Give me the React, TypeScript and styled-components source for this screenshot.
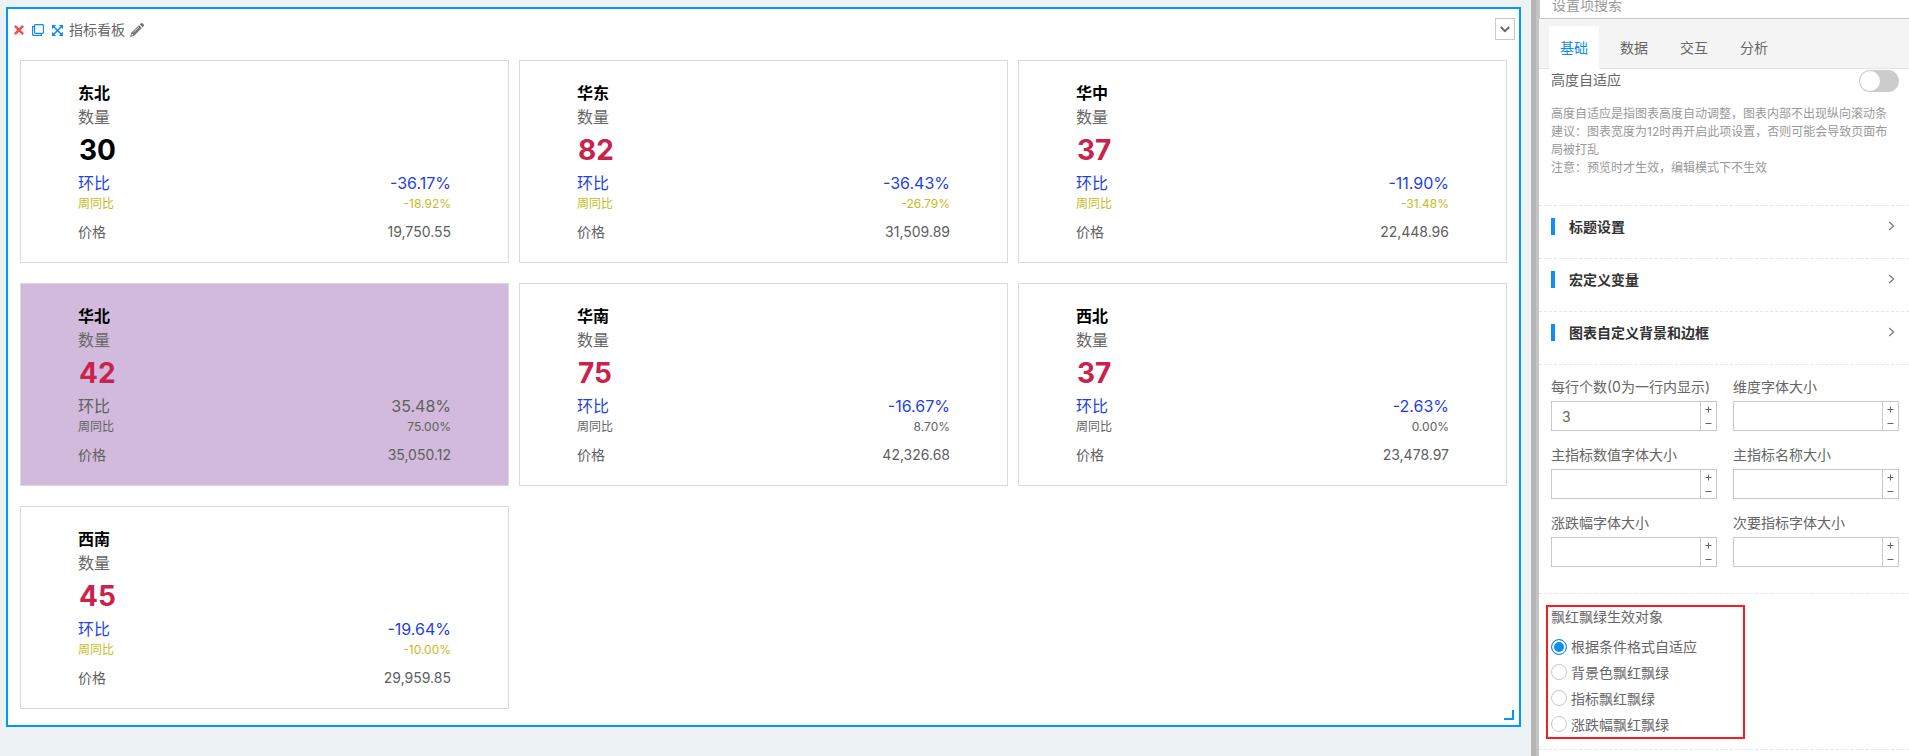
import React, { useState } from "react";
import styled, { createGlobalStyle } from "styled-components";

const GlobalStyle = createGlobalStyle`
  * { box-sizing: border-box; }
  body {
    margin: 0;
    background: #edf2f4;
    color: #666;
    font-family: Inter, "Noto Sans CJK SC", sans-serif;
    font-size: 14px;
    line-height: 21px;
  }
  button, input { font: inherit; color: inherit; }
  h2, p { margin: 0; }
`;

const Page = styled.div`
  display: flex;
  height: 100vh;
  overflow: hidden;
`;

const Canvas = styled.main`
  flex: 1;
  min-width: 0;
  padding: 7px 10px 7px 6px;
`;

const Board = styled.section`
  position: relative;
  background: #fff;
  border: 2px solid #0099fb;
  padding-bottom: 16px;
`;

const BoardHeader = styled.header`
  display: flex;
  align-items: center;
  padding: 9px 4px 20px 6px;
`;

const BoardTools = styled.div`
  display: flex;
  align-items: center;
  padding-top: 2px;
`;

const IconButton = styled.button<{ $color: string; $gap: number }>`
  display: flex;
  padding: 0;
  margin-right: ${(p) => p.$gap}px;
  border: 0;
  background: none;
  color: ${(p) => p.$color};
  cursor: pointer;
`;

const BoardTitle = styled.h2`
  margin-right: 5px;
  font-size: 14px;
  font-weight: 400;
  line-height: 20px;
`;

const MenuButton = styled.button`
  display: flex;
  align-items: center;
  justify-content: center;
  width: 20px;
  height: 22px;
  margin-left: auto;
  padding: 0;
  border: 1px solid #c8c8c8;
  background: #fff;
  cursor: pointer;
`;

const ResizeHandle = styled.span`
  position: absolute;
  right: 5px;
  bottom: 5px;
  width: 10px;
  height: 10px;
  border-right: 2px solid #0099fb;
  border-bottom: 2px solid #0099fb;
  cursor: nwse-resize;
`;

const CardGrid = styled.div`
  display: grid;
  grid-template-columns: repeat(3, minmax(0, 1fr));
  gap: 20px 10px;
  padding: 0 12px;
`;

const CardBox = styled.article<{ $tinted?: boolean }>`
  padding: 20px 57px;
  border: 1px solid #dadada;
  background: ${(p) => (p.$tinted ? "#d1badb" : "#fff")};
`;

const Region = styled.h2`
  color: #000;
  font-size: 16px;
  font-weight: 600;
  line-height: 24px;
`;

const MetricName = styled.p`
  font-size: 16px;
  line-height: 24px;
`;

const MetricValue = styled.p<{ $color: string }>`
  padding-left: 1px;
  color: ${(p) => p.$color};
  font-size: 28px;
  font-weight: 700;
  line-height: 42px;
`;

const rowSizes = {
  large: "font-size: 16px; line-height: 24px;",
  small: "font-size: 12px; line-height: 18px;",
  plain: "font-size: 14px; line-height: 21px; margin-top: 8px;",
};

const DetailRow = styled.div<{ $size: keyof typeof rowSizes; $color?: string }>`
  display: flex;
  justify-content: space-between;
  color: ${(p) => p.$color ?? "#606060"};
  ${(p) => rowSizes[p.$size]}
`;

const Splitter = styled.div`
  flex: none;
  width: 8px;
  border-right: 3px solid #c4c4c4;
  background: #b6b6b6;
`;

const Sidebar = styled.aside`
  flex: none;
  display: flex;
  flex-direction: column;
  width: 370px;
  overflow: hidden;
  background: #fff;
`;

const SearchBar = styled.div`
  flex: none;
  display: flex;
  align-items: flex-end;
  height: 19px;
  overflow: hidden;
`;

const SearchInput = styled.input`
  flex: none;
  width: 100%;
  height: 30px;
  padding: 0 12px;
  border: 1px solid #c8c8c8;
  border-right: 0;
  background: #fff;
  &::placeholder { color: #999; opacity: 1; }
`;

const TabList = styled.div`
  flex: none;
  display: flex;
  gap: 10px;
  height: 50px;
  padding: 7px 10px 0;
  background: #f4f4f4;
  box-shadow: inset 0 -1px #e4e4e4;
`;

const Tab = styled.button<{ $active: boolean }>`
  width: 50px;
  padding: 0;
  border: 0;
  border-radius: 2px 2px 0 0;
  background: ${(p) => (p.$active ? "#fff" : "transparent")};
  color: ${(p) => (p.$active ? "#108ef0" : "#666")};
  cursor: pointer;
`;

const Section = styled.div`
  padding: 0 10px 0 12px;
  border-bottom: 1px dashed #e6e6e6;
`;

const SwitchRow = styled.label`
  display: flex;
  justify-content: space-between;
  height: 22px;
  margin: 1px 0 13px;
  line-height: 20px;
`;

const Switch = styled.input`
  appearance: none;
  display: flex;
  width: 40px;
  height: 22px;
  margin: 0;
  padding: 1px;
  border-radius: 11px;
  background: #ccc;
  cursor: pointer;
  &::before {
    content: "";
    width: 20px;
    height: 20px;
    border-radius: 50%;
    background: #fff;
  }
  &:checked { justify-content: flex-end; background: #108ef0; }
`;

const Hint = styled.p`
  padding-bottom: 28px;
  color: #999;
  font-size: 12px;
  line-height: 18px;
`;

const Collapse = styled.button`
  display: flex;
  align-items: center;
  width: 100%;
  height: 53px;
  padding: 0 14px 12px 12px;
  border: 0;
  border-bottom: 1px dashed #e6e6e6;
  background: none;
  color: #333;
  font-weight: 600;
  text-align: left;
  cursor: pointer;
  &::before {
    content: "";
    width: 4px;
    height: 17px;
    margin-right: 14px;
    background: #108ef0;
  }
  svg { margin-left: auto; }
`;

const FieldGrid = styled.div`
  display: grid;
  grid-template-columns: repeat(2, minmax(0, 1fr));
  gap: 14px 16px;
  padding: 12px 0 26px;
`;

const FieldLabel = styled.label`
  display: block;
  height: 24px;
  line-height: 20px;
  white-space: nowrap;
`;

const NumberBox = styled.div`
  display: flex;
  height: 30px;
  border: 1px solid #c8c8c8;
`;

const NumberInput = styled.input`
  flex: 1;
  min-width: 0;
  padding: 0 10px;
  border: 0;
  outline: 0;
  background: none;
`;

const Stepper = styled.div`
  flex: none;
  display: flex;
  flex-direction: column;
  width: 16px;
  border-left: 1px solid #c8c8c8;
`;

const StepButton = styled.button`
  flex: 1;
  display: flex;
  align-items: center;
  justify-content: center;
  padding: 0;
  border: 0;
  background: none;
  cursor: pointer;
`;

const RadioSection = styled(Section)`
  padding: 11px 10px 10px 7px;
`;

const RadioGroup = styled.fieldset`
  display: flex;
  flex-direction: column;
  width: 199px;
  height: 134px;
  margin: 0;
  padding: 0 3px;
  border: 2px solid #f42020;
`;

const GroupTitle = styled.span`
  height: 27px;
  line-height: 20px;
`;

const RadioRow = styled.label`
  display: flex;
  align-items: center;
  height: 26px;
  gap: 4px;
`;

const Radio = styled.input`
  appearance: none;
  width: 16px;
  height: 16px;
  margin: 0;
  border: 1px solid #c8c8c8;
  border-radius: 50%;
  background: #fff;
  &:checked {
    border-color: #108ef0;
    background: #108ef0;
    box-shadow: inset 0 0 0 2px #fff;
  }
`;

const RED = "#c9234d";
const BLUE = "#1f3fe6";
const OLIVE = "#c5bb20";

type Card = {
  region: string;
  value: string;
  chain: string;
  week: string;
  price: string;
};

const cards: Card[] = [
  { region: "东北", value: "30", chain: "-36.17%", week: "-18.92%", price: "19,750.55" },
  { region: "华东", value: "82", chain: "-36.43%", week: "-26.79%", price: "31,509.89" },
  { region: "华中", value: "37", chain: "-11.90%", week: "-31.48%", price: "22,448.96" },
  { region: "华北", value: "42", chain: "35.48%", week: "75.00%", price: "35,050.12" },
  { region: "华南", value: "75", chain: "-16.67%", week: "8.70%", price: "42,326.68" },
  { region: "西北", value: "37", chain: "-2.63%", week: "0.00%", price: "23,478.97" },
  { region: "西南", value: "45", chain: "-19.64%", week: "-10.00%", price: "29,959.85" },
];

const falling = (s: string) => s.startsWith("-");

function MetricCard({ card }: { card: Card }) {
  return (
    <CardBox $tinted={!falling(card.chain)}>
      <Region>{card.region}</Region>
      <MetricName>数量</MetricName>
      <MetricValue $color={Number(card.value) > 30 ? RED : "#000"}>{card.value}</MetricValue>
      <DetailRow $size="large" $color={falling(card.chain) ? BLUE : undefined}>
        <span>环比</span>
        <span>{card.chain}</span>
      </DetailRow>
      <DetailRow $size="small" $color={falling(card.week) ? OLIVE : undefined}>
        <span>周同比</span>
        <span>{card.week}</span>
      </DetailRow>
      <DetailRow $size="plain">
        <span>价格</span>
        <span>{card.price}</span>
      </DetailRow>
    </CardBox>
  );
}

const CloseIcon = () => (
  <svg width="10" height="10" viewBox="0 0 10 10" fill="none" stroke="currentColor" strokeWidth="2.6">
    <path d="M0.9 0.9 9.1 9.1M9.1 0.9 0.9 9.1" />
  </svg>
);

const CopyIcon = () => (
  <svg width="12" height="12" viewBox="0 0 12 12" fill="none" stroke="currentColor" strokeWidth="1.2">
    <rect x="2.6" y="0.6" width="8.8" height="8.800" rx="0.8" />
    <path d="M2.600 2.600H0.600v7.800a1 1 0 0 0 1 1h7.800v-2" />
  </svg>
);

const ExpandIcon = () => (
  <svg width="11" height="11" viewBox="0 0 11 11" fill="currentColor">
    <path d="M0 0h4.200L0 4.200zM11 0v4.200L6.800 0zM0 11V6.800L4.200 11zM11 11H6.800L11 6.800z" />
    <path d="M1.500 1.500l8 8M9.500 1.500l-8 8" stroke="currentColor" strokeWidth="1.600" />
  </svg>
);

const PencilIcon = () => (
  <svg width="14" height="14" viewBox="0 0 14 14" fill="currentColor">
    <path d="M9.700 1.500 10.700.5a1.500 1.500 0 0 1 2.100 0l.7.700a1.500 1.500 0 0 1 0 2.100l-1 1z" />
    <path
      fillRule="evenodd"
      d="M9 2.200 11.800 5 4.200 12.800 0 14 1.200 9.800zM8.600 3.900 3.300 9.200l.4.400 5.300-5.300zM1.800 11.100l-.4 1.500 1.500-.4v-1.100z"
    />
  </svg>
);

const ArrowDown = () => (
  <svg width="10" height="7" viewBox="0 0 10 7" fill="none" stroke="#666" strokeWidth="2">
    <path d="M0.800 1 5 5.200 9.200 1" />
  </svg>
);

const ArrowRight = () => (
  <svg width="7" height="10" viewBox="0 0 7 10" fill="none" stroke="#777" strokeWidth="1.200">
    <path d="M1.200 1 5.600 5 1.200 9" />
  </svg>
);

const StepIcon = ({ plus }: { plus?: boolean }) => (
  <svg width="7" height="7" viewBox="0 0 7 7" stroke="#666">
    <path d={plus ? "M0.500 3.500h6M3.500 0.500v6" : "M0.500 3.500h6"} />
  </svg>
);

function NumberField({ id, label, initial }: { id: string; label: string; initial: string }) {
  const [value, setValue] = useState(initial);
  const step = (by: number) => setValue(String(Math.max(0, Number(value) + by)));
  return (
    <div>
      <FieldLabel htmlFor={id}>{label}</FieldLabel>
      <NumberBox>
        <NumberInput id={id} inputMode="numeric" value={value} onChange={(e) => setValue(e.target.value)} />
        <Stepper>
          <StepButton type="button" aria-label="增加" onClick={() => step(1)}>
            <StepIcon plus />
          </StepButton>
          <StepButton type="button" aria-label="减少" onClick={() => step(-1)}>
            <StepIcon />
          </StepButton>
        </Stepper>
      </NumberBox>
    </div>
  );
}

const tabs = ["基础", "数据", "交互", "分析"];
const groups = ["标题设置", "宏定义变量", "图表自定义背景和边框"];
const fields = [
  { id: "per-row", label: "每行个数(0为一行内显示)", initial: "3" },
  { id: "dimension-size", label: "维度字体大小", initial: "" },
  { id: "value-size", label: "主指标数值字体大小", initial: "" },
  { id: "name-size", label: "主指标名称大小", initial: "" },
  { id: "change-size", label: "涨跌幅字体大小", initial: "" },
  { id: "secondary-size", label: "次要指标字体大小", initial: "" },
];
const targets = ["根据条件格式自适应", "背景色飘红飘绿", "指标飘红飘绿", "涨跌幅飘红飘绿"];

export default function App() {
  const [tab, setTab] = useState(tabs[0]);
  const [target, setTarget] = useState(targets[0]);
  return (
    <Page>
      <GlobalStyle />
      <Canvas>
        <Board>
          <BoardHeader>
            <BoardTools>
              <IconButton type="button" aria-label="删除" $color="#ef4f50" $gap={8}>
                <CloseIcon />
              </IconButton>
              <IconButton type="button" aria-label="复制" $color="#108ef0" $gap={8}>
                <CopyIcon />
              </IconButton>
              <IconButton type="button" aria-label="放大" $color="#108ef0" $gap={6}>
                <ExpandIcon />
              </IconButton>
              <BoardTitle>指标看板</BoardTitle>
              <IconButton type="button" aria-label="编辑" $color="#777" $gap={0}>
                <PencilIcon />
              </IconButton>
            </BoardTools>
            <MenuButton type="button" aria-label="更多">
              <ArrowDown />
            </MenuButton>
          </BoardHeader>
          <CardGrid>
            {cards.map((card) => (
              <MetricCard key={card.region} card={card} />
            ))}
          </CardGrid>
          <ResizeHandle />
        </Board>
      </Canvas>
      <Splitter />
      <Sidebar>
        <SearchBar>
          <SearchInput type="text" aria-label="设置项搜索" placeholder="设置项搜索" />
        </SearchBar>
        <TabList role="tablist">
          {tabs.map((name) => (
            <Tab
              key={name}
              type="button"
              role="tab"
              aria-selected={tab === name}
              $active={tab === name}
              onClick={() => setTab(name)}
            >
              {name}
            </Tab>
          ))}
        </TabList>
        <Section>
          <SwitchRow>
            高度自适应
            <Switch type="checkbox" role="switch" />
          </SwitchRow>
          <Hint>
            高度自适应是指图表高度自动调整，图表内部不出现纵向滚动条
            <br />
            建议：图表宽度为12时再开启此项设置，否则可能会导致页面布局被打乱
            <br />
            注意：预览时才生效，编辑模式下不生效
          </Hint>
        </Section>
        {groups.map((name) => (
          <Collapse key={name} type="button" aria-expanded={false}>
            {name}
            <ArrowRight />
          </Collapse>
        ))}
        <Section>
          <FieldGrid>
            {fields.map((field) => (
              <NumberField key={field.id} {...field} />
            ))}
          </FieldGrid>
        </Section>
        <RadioSection>
          <RadioGroup aria-labelledby="target-title">
            <GroupTitle id="target-title">飘红飘绿生效对象</GroupTitle>
            {targets.map((name) => (
              <RadioRow key={name}>
                <Radio type="radio" name="target" checked={target === name} onChange={() => setTarget(name)} />
                {name}
              </RadioRow>
            ))}
          </RadioGroup>
        </RadioSection>
      </Sidebar>
    </Page>
  );
}
